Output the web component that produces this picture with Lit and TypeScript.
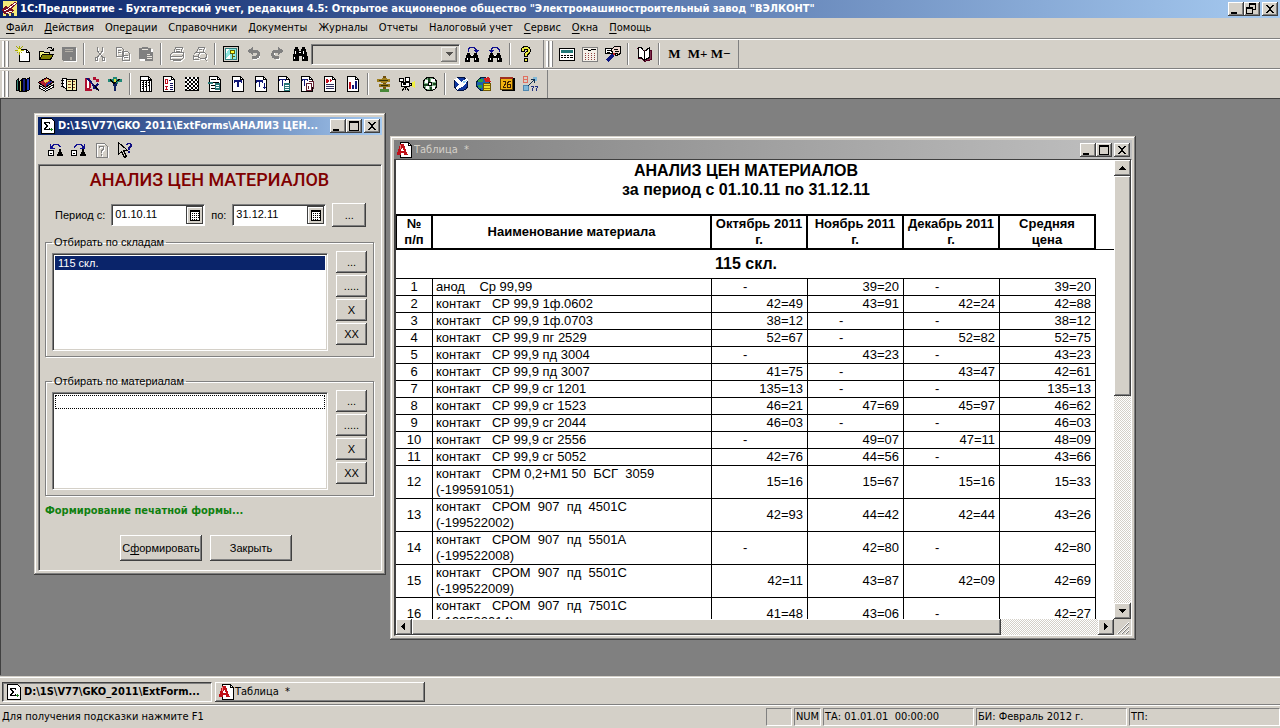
import { LitElement, html, svg, css, nothing } from "lit";
import { customElement, property } from "lit/decorators.js";

const s = (d: string, stroke = "#000", fill = "none") => svg`<path d=${d} stroke=${stroke} fill=${fill}></path>`;
const f = (d: string, fill = "#000") => svg`<path d=${d} fill=${fill}></path>`;

const sheet = [s("M2.5 .5H10.5L13.5 3.5V15.5H2.5Z", "#000", "#fff"), s("M10.5 .5V3.5H13.5")];
const grayGlyph = (d: string) => [
  svg`<path d=${d} stroke="#fff" fill="none" transform="translate(1 1)"></path>`,
  s(d, "#808080"),
];
const binoculars = [
  f("M3 7h3v2h4V7h3v2h1v3h1v4H10v-4H6v4H1v-4h1V9h1z"),
  f("M3 12h1v2H3zM11 12h1v2h-1zM7 9h2v1H7z", "#fff"),
];

const ICONS: Record<string, unknown> = {
  app: [
    f("M1 0H15V15H1Z", "#f4ea7a"),
    f("M0 9L3 5L6 6L13 1L15 3L9 8L12 9L9 12L2 13Z", "#7a1024"),
    s("M2 10L6 8L14 2M4 12L10 10", "#fff"),
    f("M9 12h3v3H9zM4 13h3v2H4z", "#1c2c60"),
  ],
  sigma: [
    s("M1.5 .5H11.5L14.5 3.5V15.5H1.5Z", "#000", "#fff"),
    f("M4 4h6v2H9V5H6v1h1v1h1v2H7v1H6v1h3v-1h1v2H4v-2h1V9h1V7H5V6H4z"),
    f("M11 10h1v1h1v1h-1v1h-1v-1h-1v-1h1z", "#208020"),
  ],
  sheetA: [
    s("M4.5 .5H12.5L15.5 3.5V15.5H4.5Z", "#000", "#fff"),
    s("M12.5 .5V3.5H15.5"),
    f("M0 13L1 12L4 2H8L11 12L12 13H8V11H5V13ZM5 9H8L6 5Z", "#c01018"),
    f("M4 3h1v4H4z", "#f08080"),
  ],
  create: [
    s("M4.5 3.5H11.5L14.5 6.5V15.5H4.5Z", "#000", "#fff"),
    s("M11.5 3.5V6.5H14.5"),
    s("M1.5 .5L7.5 7.5M7.5 .5L1.5 7.5M4.5 0V9M0 4.5H9", "#a8a800"),
    f("M3 3h3v3H3z", "#ffff60"),
  ],
  open: [
    s("M1.5 13.5V5.5H5.5L6.5 6.5H11.5V8.5", "#000", "#f0f080"),
    s("M1.5 13.5L4.5 8.5H15.5L12.5 13.5Z", "#000", "#808000"),
    s("M9 2.5L10.5 1.5H13.5L14.5 4M12 4.5H15V2"),
  ],
  save: [
    f("M2 2H16V16H3L2 15Z", "#fff"),
    f("M1 1H15V15H2L1 14Z", "#808080"),
    f("M4 3H12V4H4ZM4 5H12V6H4ZM9 11H11V14H9Z", "#b4b0a8"),
  ],
  cut: grayGlyph("M5.5 1V5L10.5 11M10.5 1V5L5.5 11M3.5 11.5H5.5V14.5H3.5ZM10.5 11.5H12.5V14.5H10.5Z"),
  copy: grayGlyph("M1.5 1.5H6.5L8.5 3.5V10.5H1.5ZM3 4.5H6M3 6.5H6M7.5 5.5H12.5L14.5 7.5V14.5H7.5ZM9 9.5H13M9 11.5H13"),
  paste: [
    f("M2 3H15V15H2Z", "#fff"),
    f("M1 2H4V1H10V2H13V6H15V15H7V13H1Z", "#808080"),
    f("M4 3H10V4H4ZM9 8H12V9H9ZM9 10H14V11H9ZM9 12H14V13H9Z", "#e8e4dc"),
  ],
  print: grayGlyph("M4.5 7.5L6.5 1.5H13.5L11.5 7.5M7 3.5H11M6.5 5.5H10.5M1.5 8.5L3.5 6.5H14.5V11.5L12.5 13.5H1.5ZM1.5 10.5H12.5L14.5 8.5M4 14.5H12"),
  preview: grayGlyph("M4.5 6.5L6.5 1.5H12.5L11 6M7 3.5H10M1.5 8.5L3.5 6.5H8M1.5 8.5V13.5H7M8.5 6.5H12.5L14.5 8.5V11.5L12.5 12.5H8.5L6.5 11V8.5ZM12 12L15 15M2 10.5H6"),
  key: [
    s("M.5 .5H15.5V15.5H.5Z", "#000", "#d4d0c8"),
    s("M2.5 2.5H13.5V13.5H2.5Z", "#308080", "#90e8e0"),
    f("M3 3H6L3 8ZM3 13L7 8V13Z", "#fff"),
    s("M7.5 4.5H11.5V7.5H7.5ZM9.5 8V12.5M9.5 10.5H11.5", "#606000", "#ffff30"),
  ],
  undo: [
    svg`<path d="M5 6H11Q14 7 13 11Q12 13 7 13" fill="none" stroke="#fff" stroke-width="2"></path>`,
    svg`<path d="M4 5H10Q13 6 12 10Q11 12 6 12" fill="none" stroke="#808080" stroke-width="3"></path>`,
    f("M1 5L7 1V9Z", "#808080"),
  ],
  redo: [
    svg`<path d="M13 6H6Q4 7 5 11Q6 13 11 13" fill="none" stroke="#fff" stroke-width="2"></path>`,
    svg`<path d="M12 5H6Q3 6 4 10Q5 12 10 12" fill="none" stroke="#808080" stroke-width="3"></path>`,
    f("M15 5L9 1V9Z", "#808080"),
  ],
  find: [
    f("M3 1h3v2h1v2h2V3h1V1h3v2h1v3h1v4h1v5h-6v-5H7v5H1v-5h0V8h1V3h1z"),
    f("M3 5h1v3H3zM11 5h1v3h-1zM2 11h1v2H2zM11 11h1v2h-1zM7 6h2v1H7z", "#fff"),
  ],
  findNext: [binoculars, s("M4 5.5V3.5L6 1.5H10L12 3.5V5", "#101090"), f("M9 4H15V5H14V6H13V7H12V6H11V5H10Z", "#101090")],
  findPrev: [binoculars, s("M12 5.5V3.5L10 1.5H6L4 3.5V5", "#101090"), f("M1 4H7V5H6V6H5V7H4V6H3V5H2Z", "#101090")],
  help: [
    svg`<path d="M5 6V4Q5 2 8 2Q11 2 11 5Q11 6 8 8V11" fill="none" stroke="#000" stroke-width="4"></path>`,
    svg`<path d="M5 5V4Q5 2 8 2Q11 2 11 5Q11 6 8 8V10" fill="none" stroke="#e8e840" stroke-width="2"></path>`,
    s("M6.5 12.5H9.5V15.5H6.5Z", "#000", "#e8e840"),
  ],
  calc: [
    s("M.5 2.5H15.5V14.5H.5Z", "#000", "#fff"),
    f("M2 4H14V7H2Z", "#207878"),
    f("M2 9h2v1H2zM5 9h2v1H5zM8 9h2v1H8zM11 9h3v1h-3zM2 11h2v1H2zM5 11h2v1H5zM8 11h2v1H8zM11 11h3v1h-3z"),
  ],
  tableCalc: [
    s("M.5 1.5H15.5V15.5H.5Z", "#808080", "#f4f0e8"),
    f("M2 3h4v1H2zM9 3h5v1H9zM6 4h3v1H6z"),
    f("M3 7h1v1H3zM6 7h1v1H6zM9 7h1v1H9zM12 7h1v1h-1zM3 9h1v1H3zM6 9h1v1H6zM9 9h1v1H9zM12 9h1v1h-1zM3 11h1v1H3zM6 11h1v1H6zM9 11h1v1H9zM12 11h1v1h-1zM3 13h1v1H3zM6 13h1v1H6zM9 13h1v1H9zM12 13h1v1h-1z", "#904040"),
  ],
  wand: [
    s("M.5 2.5H8.5V7.5H.5Z", "#000", "#fff"),
    s("M6.5 3.5L9.5 .5H15.5V7.5L11.5 9.5L7.5 7.5Z", "#000", "#f0d8d0"),
    s("M2 4.5H6M2 6.5H5M9 3.5H13M10 5.5H14M10 7.5H13"),
    svg`<path d="M2 15L8 9" stroke="#101880" stroke-width="3"></path>`,
    f("M8 7h2v2H8z", "#c02020"),
  ],
  book: [
    s("M.5 2.5H2.5V12.5H6L8.5 15.5L15.5 13.5V4.5H14", "#500020", "#803050"),
    s("M2.5 1.5H5L8.5 5.5V14.5L5 11.5H2.5Z", "#000", "#fff"),
    s("M8.5 5.5L13.5 1.5V11.5L8.5 14Z", "#000", "#fff"),
  ],
  books: [
    s("M1.5 4.5L3.5 2.5V14.5H1.5Z", "#000", "#308070"),
    s("M4.5 5.5L6.5 3.5V15.5H4.5Z", "#000", "#c8c840"),
    s("M7.5 2.5H10.5V15.5H7.5Z", "#000", "#182080"),
    s("M11.5 3.5L14.5 1.5V13.5L11.5 15.5Z", "#000", "#2038c0"),
  ],
  stack: [
    s("M1.5 9.5L7.5 13.5L15.5 8.5V11L7.5 15.5L1.5 12Z", "#000", "#fff"),
    s("M.5 6.5L8.5 1.5L15.5 6L7.5 11.5Z", "#000", "#b02030"),
    f("M5 5L9 3L11 5L7 7Z", "#f0d050"),
    f("M8 8L13 5L14 6L8 10Z", "#2030a0"),
  ],
  journal: [
    s("M1.5 2.5H5.5V13.5L1.5 10Z", "#000", "#fff"),
    s("M5.5 3.5H15.5V14.5H5.5Z", "#000", "#f8f4b0"),
    s("M7 5.5H10M12 5.5H14M7 8.5H10M12 8.5H14M7 11.5H10M12 11.5H14", "#804020"),
    s("M0 4.5H3M0 7.5H3M0 10.5H3M11.5 4V14"),
  ],
  entry: [
    svg`<path d="M2 3V13H5Q8 8 5 3Z" stroke="#b01030" stroke-width="2" fill="#fff"></path>`,
    svg`<path d="M3 2L14 14M9 13L14 8" stroke="#101070" stroke-width="2"></path>`,
    f("M9 1h3v2h3v3h-3V4H9zM1 13h7v2H1z", "#b01030"),
    s("M10 9L15 15", "#000"),
  ],
  figure: [
    f("M1 3h5V1h4v2h5v3h-4v2H6V6H1z", "#208878"),
    f("M6 7h4v3H9v5H7v-5H6z", "#102060"),
    f("M7 3h2v3H7z", "#e8e040"),
    s("M3 3.5L7 7.5L13 3"),
  ],
  grid: [sheet, s("M3 4.5H13M5.5 5V15M8.5 5V15M11.5 5V15"), f("M4 6h1v1H4zM4 8h1v1H4zM4 10h1v1H4zM7 6h1v1H7zM7 8h1v1H7zM7 10h1v1H7zM10 6h1v1h-1zM10 9h1v1h-1zM4 12h1v1H4z")],
  docD: [sheet, s("M4.5 3.5H6.5V7.5H4.5ZM4 10.5H7M5.5 10V14M4 13.5H7", "#c01020"), s("M8 4.5H10M9 7.5H12M9 9.5H12M9 11.5H12M9 13.5H12", "#101060")],
  checker: [
    f("M1 1H15V15H1Z"),
    f("M3 1h2v2H3zM7 1h2v2H7zM11 1h2v2h-2zM1 3h2v2H1zM5 3h2v2H5zM9 3h2v2H9zM13 3h1v2h-1zM3 5h2v2H3zM7 5h2v2H7zM11 5h2v2h-2zM1 7h2v2H1zM5 7h2v2H5zM9 7h2v2H9zM13 7h1v2h-1zM3 9h2v2H3zM7 9h2v2H7zM11 9h2v2h-2zM1 11h2v2H1zM5 11h2v2H5zM9 11h2v2H9zM13 11h1v2h-1zM3 13h2v1H3zM7 13h2v1H7zM11 13h2v1h-2z", "#fff"),
  ],
  docLines: [sheet, s("M4 3.5H9M4 6.5H12M4 9.5H12M4 12.5H12", "#000"), f("M1 6H6V8H1ZM8 7H13V14H8Z", "#287878"), s("M9 9.5H12M9 11.5H12", "#fff")],
  docT: [sheet, f("M4 4h8v3h-1V6h-2v5H7V6H5v1H4z", "#101878")],
  docTdown: [sheet, f("M3 4h7v3H9V6H7v5H6V6H4v1H3z", "#101878"), f("M11 7h1v4h1v1h-1v1h-1v-1h-1v-1h1z", "#101878")],
  docTtable: [sheet, f("M3 3h7v2H9V4H7v6H6V4H4v1H3z", "#101878"), f("M8 7H14V15H8Z", "#287878"), s("M9 9.5H13M9 11.5H13M9 13.5H13", "#fff")],
  docTcopy: [sheet, f("M3 3h6v2H8V4H6v6H5V4H4v1H3z", "#101878"), s("M7.5 7.5H12.5V14.5H7.5ZM9.5 5.5H14.5V12.5", "#602030", "#fff"), s("M9 9.5V13", "#602030")],
  docDK: [sheet, f("M4 3h2v1h1v2H6v1H4zM8 3h1v1h1v1H9v1H8z", "#c01020"), s("M4 8.5H12M4 10.5H12M4 12.5H12", "#303060")],
  chart: [sheet, f("M4 6h2v7H4z", "#c01020"), f("M7 9h2v4H7z", "#101878"), f("M10 5h2v8h-2z", "#101878")],
  palm: [
    f("M7 0h3v16H6v-2h1z", "#705010"),
    f("M1 3h5V2h5v1h3v3h-3v1H5V6H1z", "#a08020"),
    f("M3 8h11v3H3z", "#907018"),
    s("M3 4.5H12M5 9.5H12", "#303008"),
    f("M4 13h9v3H4z", "#488838"),
  ],
  camera: [
    s("M.5 2.5H4.5V5.5H.5ZM6.5 1.5H10.5V5.5H6.5ZM2.5 6.5H10.5V10.5H2.5Z", "#000", "#fff"),
    f("M12 7L16 5V12L12 10Z", "#f0f040"),
    s("M10.5 7.5H12.5V9.5H10.5M6.5 11V14M6 11L2.5 15.5M7 11L10.5 15.5"),
    f("M4 7h3v2H4z"),
  ],
  reel: [
    svg`<circle cx="8" cy="8" r="7" fill="#80b088" stroke="#000"></circle>`,
    f("M3 4h3v3H3zM9 3h4v3H9zM10 10h3v3h-3zM4 10h3v3H4z", "#fff"),
    f("M6 2h2v4H6zM2 8h4v2H2zM11 7h3v2h-3zM8 11h2v3H8z", "#184820"),
    svg`<circle cx="8" cy="8" r="2" fill="#fff" stroke="#000"></circle>`,
  ],
  globe: [
    svg`<circle cx="8" cy="8" r="7" fill="#1038a0" stroke="#001040"></circle>`,
    f("M1 3L4 2L8 6L14 2L15 4L12 9L9 11L4 14L2 12L6 9Z", "#fff"),
    f("M9 6L14 4L11 8Z", "#90d0f0"),
  ],
  globeDb: [
    svg`<circle cx="7" cy="8" r="6.5" fill="#1860b0" stroke="#002040"></circle>`,
    f("M3 3h4v3H2zM2 9h4v3H3z", "#30a040"),
    f("M8 2L13 1L15 6H9Z", "#d02020"),
    s("M7.5 7.5H14.5V14.5H7.5Z", "#705800", "#f0e030"),
    s("M8 9.5H14M8 12H14", "#907800"),
  ],
  calendar: [
    f("M3 2H16V15H3Z"),
    s("M1.5 1.5H13.5V13.5H1.5Z", "#604000", "#f0b010"),
    f("M1 1H14V3H1Z", "#a03020"),
    s("M4 5.5H6.5V8L4.5 10.5V11.5H7M11.5 5.5H9.5L8.5 7.5V11.5H11.5V8.5H9", "#402000"),
  ],
  convert: [
    s("M1.5 .5H5.5V3.5H1.5ZM1.5 3.5H5.5V6.5H1.5Z", "#e07060"),
    svg`<circle cx="4" cy="12" r="3" fill="#80b8d8" stroke="#5088b0"></circle>`,
    f("M11 1h4v4h-4z", "#80b8d8"),
    s("M6 10L12 4M9 3.5H12.5V7", "#103050"),
    s("M9 10.5H11.5L10 14.5M13 10.5H15.5L14 14.5", "#203080"),
  ],
  restore: [
    s("M.5 8.5H5.5V13.5H.5ZM2 11.5H4", "#000", "#fff"),
    f("M9 13L12 7L15 13V14H9ZM11 7h2v2h-2z"),
    s("M4 4.5L6 2.5H10L12.5 5", "#101090"),
    f("M2 2V7H7V6H5V5H4V4H3V2Z", "#101090"),
  ],
  remember: [
    s("M.5 8.5H5.5V13.5H.5ZM2 11.5H4", "#000", "#fff"),
    f("M9 13L12 7L15 13V14H9ZM11 7h2v2h-2z"),
    s("M3 5.5L6 2.5H10L12 4.5", "#101090"),
    f("M14 2V7H9V6H11V5H12V4H13V2Z", "#101090"),
  ],
  docHelp: [grayGlyph("M2.5 1.5H10.5L13.5 4.5V15.5H2.5ZM5.5 6V4.5H9.5V7.5L7.5 8.5V10.5M7.5 12V14")],
  pointer: [
    s("M1.5 .5V12.5L4.5 9.5L7.5 15.5L9.5 14.5L6.5 8.5H10.5Z", "#000", "#d4d0c8"),
    f("M9 2h1V1h4v1h1v3h-1v1h-1v2h-2V5h1V4h1V2h-2v1H9zM11 9h2v2h-2z", "#101080"),
  ],
  min: [f("M3 11H9V13H3Z")],
  max: [svg`<path d="M3.5 3.5H12.5V12.5H3.5Z" fill="none" stroke="#000"></path>`, f("M3 3H13V5H3Z")],
  rest: [f("M5 2H12V4H5ZM5 4h1v2H5zM11 4h1v5H9V8h2zM2 6H9V8H2ZM2 8h1v4H2zM8 8h1v5H2v-1h6z")],
  close: [f("M4 4h2v1h1v1h2V5h1V4h2v1h-1v1h-1v1H9v2h1v1h1v1h1v1h-2v-1H9v-1H7v1H6v1H4v-1h1v-1h1V9h1V7H6V6H5V5H4z")],
  up: [f("M8 6h1v1h1v1h1v1h1v1H5V9h1V8h1V7h1z")],
  down: [f("M5 6h7v1h-1v1h-1v1H9v1H8V9H7V8H6V7H5z")],
  left: [f("M9 4v7H8v-1H7V9H6V8H5V7h1V6h1V5h1V4z")],
  right: [f("M6 4v7h1v-1h1V9h1V8h1V7H9V6H8V5H7V4z")],
  date: [
    s("M3.5 3.5H12.5V13.5H3.5Z", "#000", "#fff"),
    f("M3 3H13V5H3ZM5 6h1v1H5zM7 6h1v1H7zM9 6h1v1H9zM11 6h1v1h-1zM5 8h1v1H5zM7 8h1v1H7zM9 8h1v1H9zM11 8h1v1h-1zM5 10h1v1H5zM7 10h1v1H7zM9 10h1v1H9zM11 10h1v1h-1zM5 12h1v1H5zM7 12h1v1H7zM9 12h1v1H9z"),
  ],
  grip: [
    s("M15 4L4 15M15 8L8 15M15 12L12 15", "#808080"),
    s("M15 3L3 15M15 7L7 15M15 11L11 15", "#fff"),
  ],
};

@customElement("px-icon")
class PxIcon extends LitElement {
  @property() name = "";
  static styles = css`
    :host { display: block; width: 16px; height: 16px; flex: none; }
    .art { display: block; width: 16px; height: 16px; shape-rendering: crispEdges; }
  `;
  render() {
    return html`<svg class="art" viewBox="0 0 16 16" aria-hidden="true">${ICONS[this.name]}</svg>`;
  }
}

type Tool = [icon: string, label: string] | "|";

const FILE_TOOLS: Tool[] = [
  ["create", "Новый"], ["open", "Открыть"], ["save", "Сохранить"], "|",
  ["cut", "Вырезать"], ["copy", "Копировать"], ["paste", "Вставить"], "|",
  ["print", "Печать"], ["preview", "Просмотр"], "|",
  ["key", "Свойства"], ["undo", "Отменить"], ["redo", "Повторить"], ["find", "Найти"],
];
const FIND_TOOLS: Tool[] = [["findNext", "Найти следующий"], ["findPrev", "Найти предыдущий"], "|", ["help", "Помощь"]];
const CALC_TOOLS: Tool[] = [["calc", "Калькулятор"], ["tableCalc", "Табло"], ["wand", "Формула"], "|", ["book", "Описание"], "|"];
const ACCOUNT_TOOLS: Tool[] = [
  ["books", "План счетов"], ["stack", "Журнал операций"], ["journal", "Журнал проводок"], ["entry", "Проводка"], ["figure", "Операция"], "|",
  ["grid", "Оборотная ведомость"], ["docD", "Сводные проводки"], ["checker", "Шахматка"], ["docLines", "Анализ счета"],
  ["docT", "Карточка счета"], ["docTdown", "Анализ по датам"], ["docTtable", "Анализ по субконто"], ["docTcopy", "Обороты"],
  ["docDK", "Отчет по проводкам"], ["chart", "Диаграмма"], "|",
  ["palm", "Путеводитель"], ["camera", "Ролики"], ["reel", "Видео"], "|",
  ["globe", "Интернет"], ["globeDb", "Обмен данными"], ["calendar", "Календарь"], ["convert", "Конвертация"],
];

const MENU: [string, string, string][] = [
  ["", "Ф", "айл"], ["", "Д", "ействия"], ["Опе", "р", "ации"], ["Справочники", "", ""], ["Документы", "", ""], ["Журналы", "", ""],
  ["Отчеты", "", ""], ["Налоговый учет", "", ""], ["", "С", "ервис"], ["", "О", "кна"], ["", "П", "омощь"],
];

const ROWS: string[][] = [
  ["анод    Ср 99,99", "-", "39=20", "-", "39=20"],
  ["контакт   СР 99,9 1ф.0602", "42=49", "43=91", "42=24", "42=88"],
  ["контакт   СР 99,9 1ф.0703", "38=12", "-", "-", "38=12"],
  ["контакт   СР 99,9 пг 2529", "52=67", "-", "52=82", "52=75"],
  ["контакт   СР 99,9 пд 3004", "-", "43=23", "-", "43=23"],
  ["контакт   СР 99,9 пд 3007", "41=75", "-", "43=47", "42=61"],
  ["контакт   СР 99,9 сг 1201", "135=13", "-", "-", "135=13"],
  ["контакт   СР 99,9 сг 1523", "46=21", "47=69", "45=97", "46=62"],
  ["контакт   СР 99,9 сг 2044", "46=03", "-", "-", "46=03"],
  ["контакт   СР 99,9 сг 2556", "-", "49=07", "47=11", "48=09"],
  ["контакт   СР 99,9 сг 5052", "42=76", "44=56", "-", "43=66"],
  ["контакт   СРМ 0,2+М1 50  БСГ  3059\n(-199591051)", "15=16", "15=67", "15=16", "15=33"],
  ["контакт   СРОМ  907  пд  4501С\n(-199522002)", "42=93", "44=42", "42=44", "43=26"],
  ["контакт   СРОМ  907  пд  5501А\n(-199522008)", "-", "42=80", "-", "42=80"],
  ["контакт   СРОМ  907  пд  5501С\n(-199522009)", "42=11", "43=87", "42=09", "42=69"],
  ["контакт   СРОМ  907  пд  7501С\n(-199522014)", "41=48", "43=06", "-", "42=27"],
];

@customElement("app-root")
class AppRoot extends LitElement {
  static styles = css`
    :host {
      --face: #d4d0c8;
      --ui: "DejaVu Sans Condensed", "DejaVu Sans", sans-serif;
      --form: "Liberation Sans", sans-serif;
      display: flex;
      flex-direction: column;
      height: 100vh;
      overflow: hidden;
      background: var(--face);
      color: #000;
      font: 11px/14px var(--ui);
    }
    * { box-sizing: border-box; }
    button, input, select { font: inherit; color: inherit; margin: 0; padding: 0; border: 0; border-radius: 0; background: none; }
    .raised { background: var(--face); box-shadow: inset -1px -1px #404040, inset 1px 1px #fff, inset -2px -2px #808080; }

    .titlebar { display: flex; align-items: center; height: 18px; padding: 0 2px; gap: 2px; font-weight: bold; color: #fff; white-space: nowrap; background: linear-gradient(90deg, #0a246a, #a6caf0); flex: none; }
    .titlebar.idle { background: linear-gradient(90deg, #808080, #c0c0c0); color: #d4d0c8; font-weight: normal; height: 19px; }
    .caption { flex: 1; min-width: 0; overflow: hidden; white-space: pre; }
    .winbtns { display: flex; }
    .winbtn { width: 16px; height: 14px; overflow: hidden; display: flex; align-items: center; justify-content: center; }
    .winbtn:last-child { margin-left: 2px; }

    .menu { display: flex; gap: 1px; height: 21px; align-items: center; padding: 0 1px; border-bottom: 1px solid #808080; flex: none; }
    .menu button { padding: 0 5px; }
    .menu u, .action u { text-underline-offset: 2px; }
    .bar { display: flex; height: 30px; border-top: 1px solid #fff; border-bottom: 1px solid #808080; flex: none; }
    .bar.last { border-bottom-color: #404040; }
    .band { display: flex; align-items: center; padding-right: 6px; border-right: 1px solid #808080; }
    .handle { width: 7px; height: 26px; margin: 0 2px; background: linear-gradient(90deg, #fff 2px, #808080 2px 3px, transparent 3px 4px, #fff 4px 6px, #808080 6px); }
    .tool { width: 23px; height: 24px; display: flex; align-items: center; justify-content: center; }
    .sep { width: 2px; height: 22px; margin: 0 3px; border-left: 1px solid #808080; border-right: 1px solid #fff; }
    .mem { font: bold 13px/16px "Liberation Serif", serif; }
    .combo { display: flex; width: 149px; height: 21px; padding: 2px; border: 1px solid; border-color: #808080 #fff #fff #808080; box-shadow: inset 1px 1px #404040; }
    .combo select { flex: 1; appearance: none; min-width: 0; }
    .combo .drop { width: 16px; display: flex; align-items: center; justify-content: center; overflow: hidden; opacity: 0.6; pointer-events: none; }

    .desktop { flex: 1; position: relative; overflow: hidden; background: #808080; border-left: 1px solid #404040; min-height: 0; }
    .window { position: absolute; display: flex; flex-direction: column; padding: 4px; background: var(--face); box-shadow: inset -1px -1px #404040, inset 1px 1px #d4d0c8, inset -2px -2px #808080, inset 2px 2px #fff; }
    .form-window { left: 33px; top: 14px; width: 352px; height: 462px; }
    .table-window { left: 389px; top: 37px; width: 746px; height: 504px; }

    .formtools { display: flex; align-items: center; height: 29px; padding: 0 6px; flex: none; }
    .form { flex: 1; border: 1px solid; border-color: #808080 #fff #fff #808080; box-shadow: inset 1px 1px #404040; padding: 4px 7px 4px 6px; font: 11px/14px var(--form); }
    .form h1 { margin: 0; text-align: center; font: 500 18px/22px Roboto, sans-serif; color: #800000; }
    .period { display: flex; align-items: center; gap: 6px; height: 24px; margin: 12px 0 0 10px; }
    .datebox { display: flex; width: 94px; height: 22px; padding: 1px; background: #fff; border: 1px solid; border-color: #808080 #fff #fff #808080; box-shadow: inset 1px 1px #404040; }
    .datebox input { flex: 1; min-width: 0; padding: 0 0 2px 2px; }
    .datebtn { width: 17px; display: flex; align-items: center; justify-content: center; overflow: hidden; box-shadow: inset 0 0 0 1px #404040, inset 2px 2px #fff; background: var(--face); }
    .more { width: 34px; height: 24px; }
    fieldset { margin: 8px 0 0; padding: 2px 6px 5px; min-width: 0; border: 1px solid #808080; box-shadow: 1px 1px #fff, inset 1px 1px #fff; display: block; }
    fieldset + fieldset { margin-top: 17px; }
    legend { padding: 0 2px; margin: 0; line-height: 14px; }
    .pick { display: flex; gap: 8px; }
    .list { flex: 1; height: 98px; margin: 2px 0 0; padding: 2px; list-style: none; background: #fff; border: 1px solid; border-color: #808080 #fff #fff #808080; box-shadow: inset 1px 1px #404040, inset -1px -1px var(--face); }
    .list li { height: 14px; padding: 0 2px; border: 1px solid transparent; line-height: 13px; }
    .list .chosen { background: #0a246a; color: #fff; }
    .list .focus { border: 1px dotted #000; }
    .side { display: flex; flex-direction: column; gap: 2px; }
    .side button { width: 31px; height: 22px; }
    .state { margin: 8px 0 0; font: bold 11px/14px var(--ui); color: #108010; }
    .actions { display: flex; justify-content: center; gap: 8px; margin: 17px 7px 0 0; }
    .action { width: 82px; height: 26px; white-space: nowrap; }

    .view { flex: 1; min-height: 0; display: grid; grid-template: minmax(0, 1fr) 16px / minmax(0, 1fr) 17px; border: solid; border-width: 1px 1px 1px 2px; border-color: #404040 #fff #fff #404040; }
    .sheet { overflow: hidden; background: #fff; }
    table { width: 100%; table-layout: fixed; border-spacing: 0; font: 13px/16px var(--form); }
    .c-no { width: 37px; }
    .c-name { width: 279px; }
    .c-sum { width: 96px; }
    th, td { padding: 0; }
    .report { height: 54px; padding-top: 1px; vertical-align: top; font: bold 16px/19px var(--form); }
    .head th { height: 35px; border: solid #000; border-width: 2px 2px 2px 0; line-height: 16px; font-size: 13px; }
    .head th:first-child { border-left-width: 1px; }
    .head .rest { border-bottom: 1px solid #000; }
    .group { height: 29px; border-bottom: 1px solid #000; font-size: 16px; }
    .row td { border: solid #000; border-width: 0 1px 1px 0; text-align: right; padding-right: 4px; }
    .row .no { text-align: center; padding: 0; }
    .row .name { text-align: left; padding: 0 0 0 3px; white-space: pre; }
    .row .dash { text-align: left; padding-left: 31px; }
    .track { display: flex; background: repeating-conic-gradient(#fff 0 25%, #d4d0c8 0 50%) 0 0 / 2px 2px; }
    .track.v { flex-direction: column; }
    .track button { width: 16px; height: 16px; overflow: hidden; flex: none; }
    .track.v button { width: 17px; }
    .fill-v { flex: 0 1 48%; margin-bottom: auto; }
    .fill-h { flex: 0 1 82%; margin-right: auto; }

    .tasks { display: flex; align-items: center; gap: 3px; height: 29px; padding: 3px 2px 0; border-top: 1px solid #808080; box-shadow: inset 0 1px var(--face), inset 0 2px #fff; flex: none; }
    .task { display: flex; align-items: center; gap: 1px; width: 210px; height: 20px; padding: 0 3px; text-align: left; white-space: pre; }
    .task.active { font-weight: bold; gap: 2px; border: 1px solid; border-color: #404040 #fff #fff #404040; box-shadow: inset 1px 1px #808080; }
    .status { display: flex; gap: 2px; height: 24px; padding: 2px 0 2px 2px; border-top: 1px solid #808080; box-shadow: inset 0 1px #fff; align-items: center; flex: none; }
    .hint { flex: 1; }
    .cell { height: 18px; padding: 1px 1px; border: 1px solid; border-color: #808080 #fff #fff #808080; white-space: pre; }
    .w-s { width: 26px; }
    .w-m { width: 27px; padding: 1px 0; text-align: center; }
    .w-l { width: 151px; }
  `;

  private tools(list: Tool[]) {
    return list.map((t) => t === "|"
      ? html`<span class="sep"></span>`
      : html`<button class="tool" aria-label=${t[1]} title=${t[1]}><px-icon name=${t[0]}></px-icon></button>`);
  }

  private winButtons(middle: string) {
    return html`<div class="winbtns">
      <button class="winbtn raised" aria-label="Свернуть"><px-icon name="min"></px-icon></button>
      <button class="winbtn raised" aria-label="Развернуть"><px-icon name=${middle}></px-icon></button>
      <button class="winbtn raised" aria-label="Закрыть"><px-icon name="close"></px-icon></button>
    </div>`;
  }

  private picker(title: string, item: string) {
    return html`<fieldset>
      <legend>${title}</legend>
      <div class="pick">
        <ul class="list" role="listbox" aria-label=${title}>
          <li role="option" aria-selected=${item ? "true" : "false"} class=${item ? "chosen" : "focus"}>${item || nothing}</li>
        </ul>
        <div class="side">
          ${["...", ".....", "X", "XX"].map((t) => html`<button class="raised">${t}</button>`)}
        </div>
      </div>
    </fieldset>`;
  }

  private dateBox(id: string, value: string) {
    return html`<div class="datebox">
      <input id=${id} type="text" .value=${value}>
      <button class="datebtn" aria-label="Календарь"><px-icon name="date"></px-icon></button>
    </div>`;
  }

  private formWindow() {
    return html`<section class="window form-window">
      <div class="titlebar">
        <px-icon name="sigma"></px-icon>
        <span class="caption">D:\\1S\\V77\\GKO_2011\\ExtForms\\АНАЛИЗ ЦЕН...</span>
        ${this.winButtons("max")}
      </div>
      <div class="formtools">${this.tools([["restore", "Восстановить"], ["remember", "Запомнить"], ["docHelp", "Описание"], ["pointer", "Что это?"]])}</div>
      <div class="form">
        <h1>АНАЛИЗ ЦЕН МАТЕРИАЛОВ</h1>
        <div class="period">
          <label for="from">Период с:</label>${this.dateBox("from", "01.10.11")}
          <label for="to">по:</label>${this.dateBox("to", "31.12.11")}
          <button class="more raised">...</button>
        </div>
        ${this.picker("Отбирать по складам", "115 скл.")}
        ${this.picker("Отбирать по материалам", "")}
        <p class="state">Формирование печатной формы...</p>
        <div class="actions">
          <button class="action raised">С<u>ф</u>ормировать</button>
          <button class="action raised">Закрыть</button>
        </div>
      </div>
    </section>`;
  }

  private tableWindow() {
    return html`<section class="window table-window">
      <div class="titlebar idle">
        <px-icon name="sheetA"></px-icon><span class="caption">Таблица  *</span>${this.winButtons("max")}
      </div>
      <div class="view">
        <div class="sheet">
          <table>
            <colgroup><col class="c-no"><col class="c-name"><col class="c-sum"><col class="c-sum"><col class="c-sum"><col class="c-sum"><col></colgroup>
            <thead>
              <tr><th class="report" colspan="6">АНАЛИЗ ЦЕН МАТЕРИАЛОВ<br>за период с 01.10.11 по 31.12.11</th></tr>
              <tr class="head">
                <th>№<br>п/п</th><th>Наименование материала</th>
                <th>Октябрь 2011<br>г.</th><th>Ноябрь 2011<br>г.</th><th>Декабрь 2011<br>г.</th><th>Средняя<br>цена</th><td class="rest"></td>
              </tr>
            </thead>
            <tbody>
              <tr><th class="group" colspan="6">115 скл.</th></tr>
              ${ROWS.map(([name, ...sums], i) => html`<tr class="row">
                <td class="no">${i + 1}</td><td class="name">${name}</td>
                ${sums.map((v) => html`<td class=${v === "-" ? "dash" : "sum"}>${v}</td>`)}
              </tr>`)}
            </tbody>
          </table>
        </div>
        <div class="track v">
          <button class="raised" aria-label="Вверх"><px-icon name="up"></px-icon></button>
          <div class="fill-v raised"></div>
          <button class="raised" aria-label="Вниз"><px-icon name="down"></px-icon></button>
        </div>
        <div class="track">
          <button class="raised" aria-label="Влево"><px-icon name="left"></px-icon></button>
          <div class="fill-h raised"></div>
          <button class="raised" aria-label="Вправо"><px-icon name="right"></px-icon></button>
        </div>
        <px-icon name="grip"></px-icon>
      </div>
    </section>`;
  }

  render() {
    return html`
      <header class="titlebar">
        <px-icon name="app"></px-icon>
        <span class="caption">1С:Предприятие - Бухгалтерский учет, редакция 4.5: Открытое акционерное общество "Электромашиностроительный завод "ВЭЛКОНТ"</span>
        ${this.winButtons("rest")}
      </header>
      <nav class="menu">${MENU.map(([a, b, c]) => html`<button>${a}${b ? html`<u>${b}</u>` : nothing}${c}</button>`)}</nav>
      <div class="bar">
        <div class="band">
          <span class="handle"></span>${this.tools(FILE_TOOLS)}
          <div class="combo"><select disabled aria-label="Поиск"></select><span class="drop raised"><px-icon name="down"></px-icon></span></div>
          ${this.tools(FIND_TOOLS)}
        </div>
        <div class="band">
          <span class="handle"></span>${this.tools(CALC_TOOLS)}
          <button class="tool mem">M</button><button class="tool mem">M+</button><button class="tool mem">M−</button>
        </div>
      </div>
      <div class="bar last"><div class="band"><span class="handle"></span>${this.tools(ACCOUNT_TOOLS)}</div></div>
      <main class="desktop">${this.tableWindow()}${this.formWindow()}</main>
      <div class="tasks">
        <button class="task active"><px-icon name="sigma"></px-icon>D:\\1S\\V77\\GKO_2011\\ExtForm...</button>
        <button class="task raised"><px-icon name="sheetA"></px-icon>Таблица  *</button>
      </div>
      <footer class="status">
        <span class="hint">Для получения подсказки нажмите F1</span>
        <span class="cell w-s"></span><span class="cell w-m">NUM</span>
        <span class="cell w-l">ТА: 01.01.01  00:00:00</span><span class="cell w-l">БИ: Февраль 2012 г.</span><span class="cell w-l">ТП:</span>
      </footer>
    `;
  }
}
